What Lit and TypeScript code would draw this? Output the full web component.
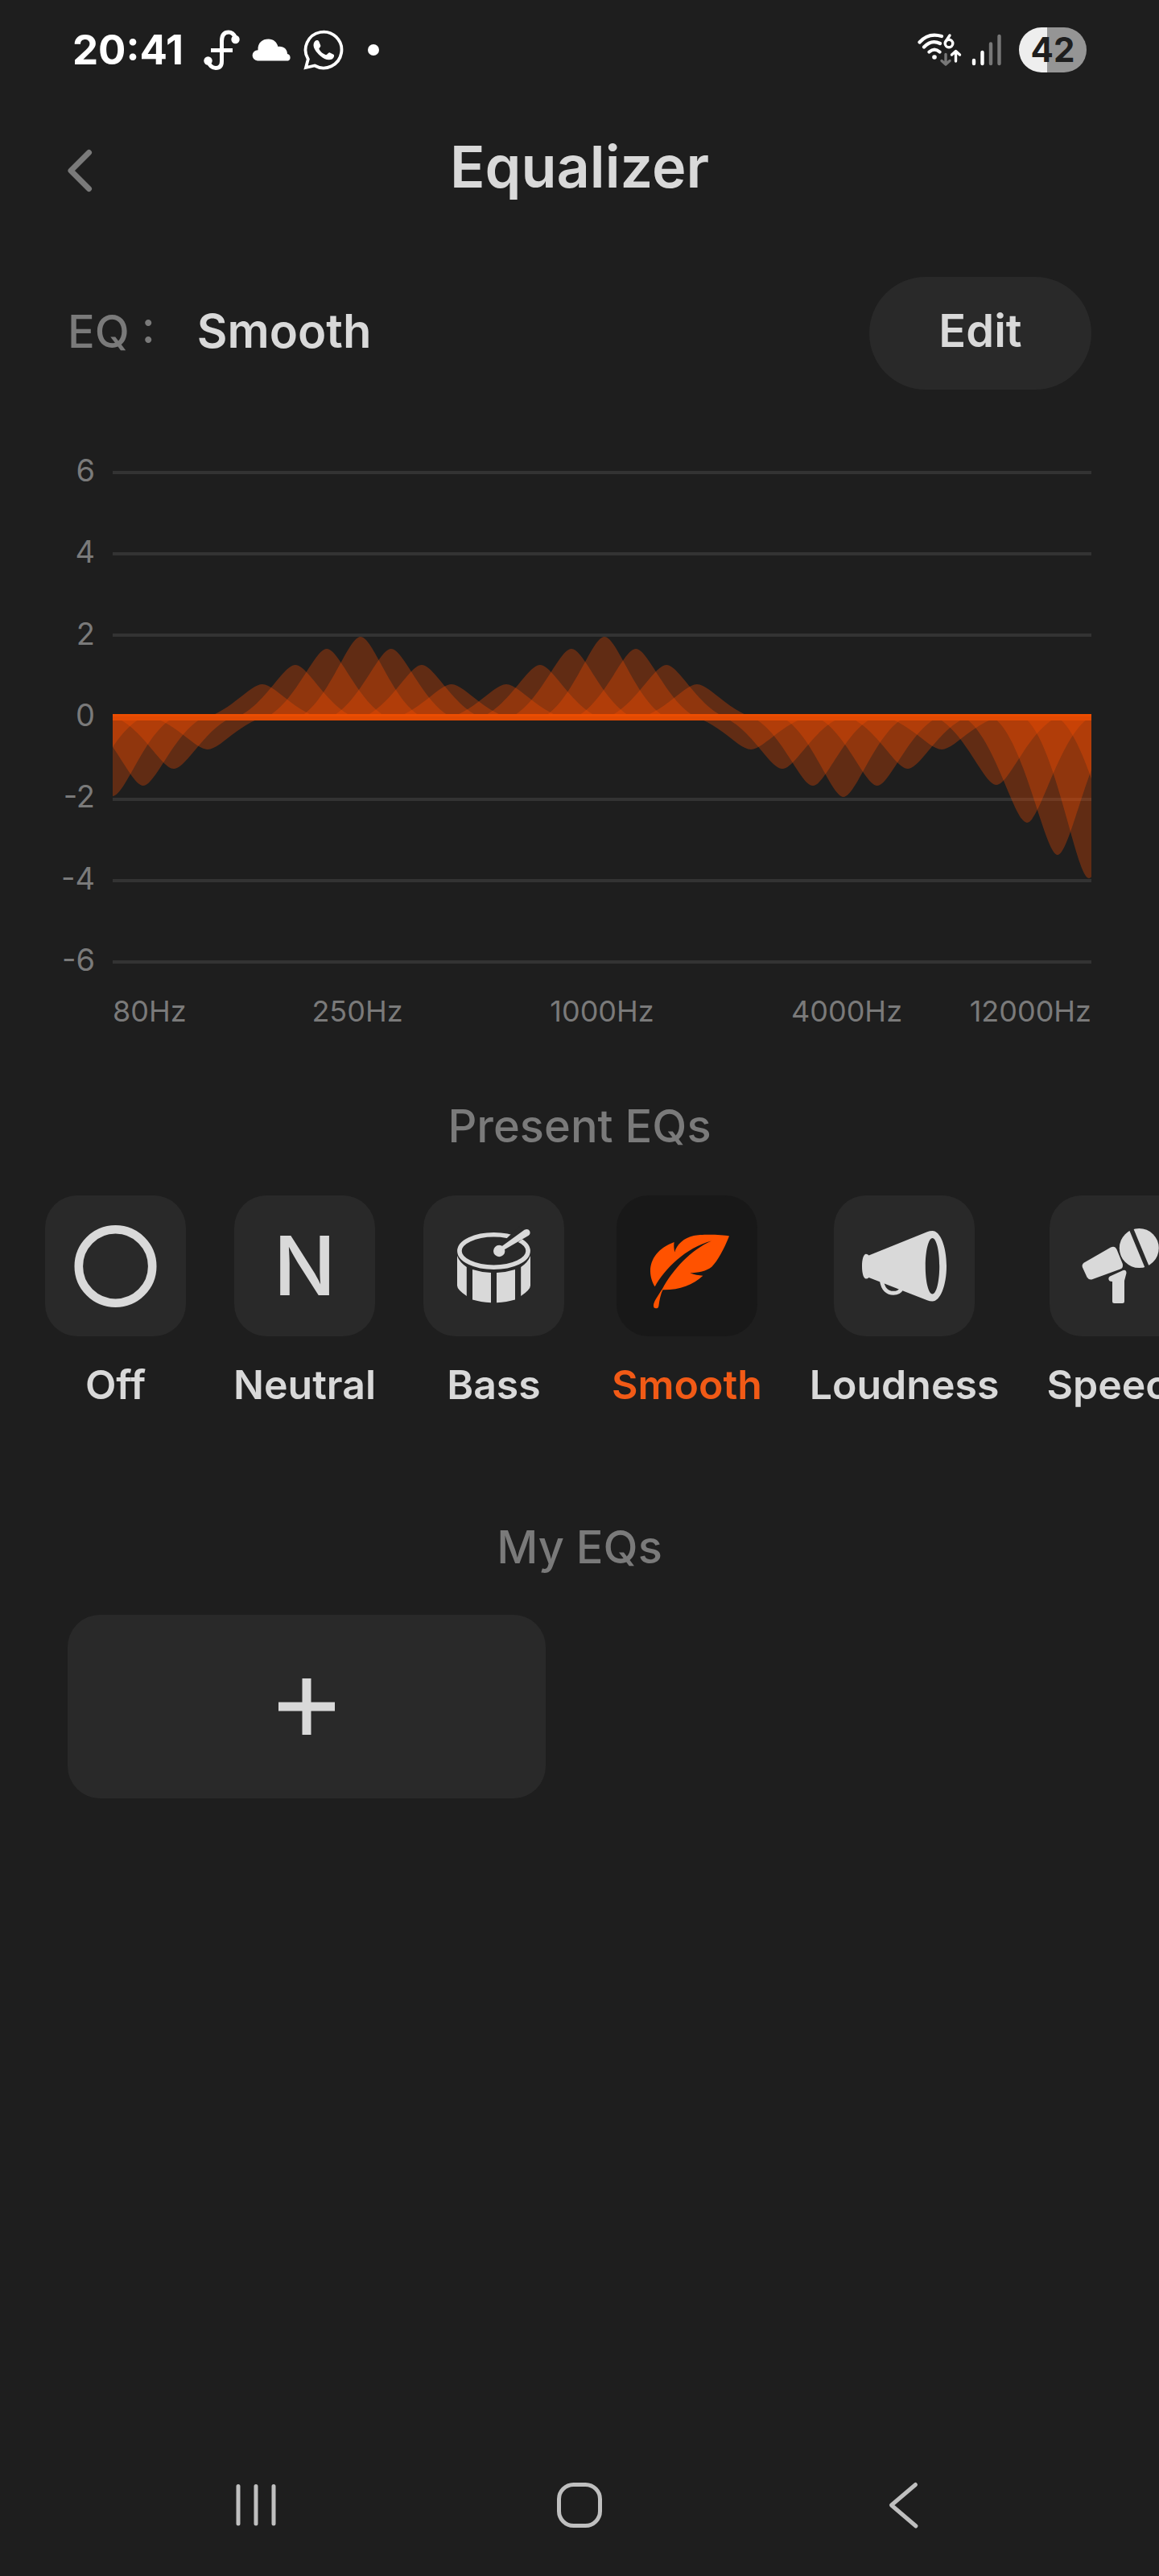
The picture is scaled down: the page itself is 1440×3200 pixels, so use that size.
import { LitElement, html, svg, css } from "lit";
import { customElement, property, state } from "lit/decorators.js";
import { classMap } from "lit/directives/class-map.js";

type Band = [x: number, gain: number];

/* Horizontal centre and gain in pixels of every filter band (positive = boost). */
const BANDS: Band[] = [
  [-78, -64], [-38, -85],
  [0, -98], [38, -85], [76, -64], [118, -40],
  [186, 41], [227, 65], [266, 85], [308, 100], [346, 85], [384, 65], [421, 41],
  [489, 41], [531, 65], [570, 85], [611, 100], [650, 85], [688, 65], [726, 41],
  [793, -40], [832, -64], [870, -85], [908, -99], [950, -85], [988, -64], [1030, -40],
  [1098, -84], [1136, -131], [1174, -171], [1213, -200],
  [1254, -171], [1292, -131],
];

const ZERO = 307;

@customElement("eq-chart")
export class EqChart extends LitElement {
  static styles = css`
    :host { display: block; }
    .chart { display: grid; grid-template-columns: 34px 1fr; column-gap: 22px; }
    .levels {
      display: flex; flex-direction: column; justify-content: space-between;
      align-items: flex-end; height: 644px; margin: 0; padding: 0; list-style: none;
    }
    .levels, .freqs { color: #7a7a7a; font-weight: 400; }
    .levels { font-size: 38px; line-height: 36px; white-space: nowrap; }
    .plot { display: block; width: 100%; height: 614px; margin-top: 18px; overflow: hidden; }
    .freqs {
      grid-column: 2; display: grid; grid-template-columns: 1fr 2fr 2fr 2fr 1fr;
      margin: 26px 0 0; padding: 0; list-style: none; font-size: 36px; line-height: 40px;
      white-space: nowrap; text-align: center;
    }
    .freqs li:first-child { justify-self: start; }
    .freqs li:last-child { justify-self: end; }
  `;

  private bell([x, g]: Band) {
    const base = g > 0 ? ZERO + 4 : ZERO - 4;
    const top = ZERO - g;
    return svg`<path fill="#ff5000" fill-opacity="0.3" d="M${x - 92} ${base}C${x - 46} ${base} ${x - 18} ${top} ${x} ${top}S${x + 46} ${base} ${x + 92} ${base}Z"/>`;
  }

  render() {
    return html`
      <div class="chart">
        <ul class="levels">
          ${[6, 4, 2, 0, -2, -4, -6].map((n) => html`<li>${n}</li>`)}
        </ul>
        <svg class="plot" viewBox="0 0 1216 614" preserveAspectRatio="none" role="img" aria-label="Equalizer curve">
          ${[3, 104, 205, 409, 510, 611].map(
            (y) => svg`<rect x="0" y=${y - 2} width="1216" height="4" fill="#333333"/>`
          )}
          ${BANDS.map((b) => this.bell(b))}
          <rect x="0" y=${ZERO - 4} width="1216" height="8" fill="#e24a03"/>
          <rect x="0" y=${ZERO - 4} width="1216" height="3" fill="#ec4d01"/>
        </svg>
        <ul class="freqs">
          ${["80Hz", "250Hz", "1000Hz", "4000Hz", "12000Hz"].map((f) => html`<li>${f}</li>`)}
        </ul>
      </div>
    `;
  }
}

const ICONS: Record<string, unknown> = {
  Off: svg`<circle cx="87.5" cy="88" r="45.7" fill="none" stroke="currentColor" stroke-width="10.6"/>`,
  Bass: svg`
    <ellipse cx="87.5" cy="69" rx="42.6" ry="20.2" fill="none" stroke="currentColor" stroke-width="5.6"/>
    <path d="M103 60 L122 42" stroke="#292929" stroke-width="9"/>
    <path d="M107 55 L118 48 L122 55 L112 62Z" fill="#292929"/>
    <circle cx="94.2" cy="69" r="7.2" fill="currentColor"/>
    <path fill="currentColor" d="M97 63.500L125.500 42.800Q130 40.500 132 44Q133.800 47.500 130.500 50L99.500 68Z"/>
    <g fill="currentColor">
      <path d="M42 75Q45 83 53.800 89V125Q42 117 42 112Z"/>
      <path d="M133 75Q130 83 121.200 89V125Q133 117 133 112Z"/>
      <path d="M61 92Q72 95.500 84 96V133.300Q71 132.500 61 129.500Z"/>
      <path d="M114 92Q103 95.500 91 96V133.300Q104 132.500 114 129.500Z"/>
    </g>`,
  Smooth: svg`
    <path fill="currentColor" d="M140 50.500C131 48.500 105 48 96 50C84 52.500 74.500 61 72.300 70.500C71.300 66 71 62 71.600 58C52 65 42 79 42 94C42 101 44.500 108.500 47.700 113.300C60 91 86 65 118 56.500C92 68 70 92 57 116C50 127 46 132 46 137Q46 140.300 49 140.300H50Q52 140.300 52.500 136.500C53.500 129 55 122 57.500 117.200C78 117.500 95 111.500 107.300 99.700C102 99.500 96.500 98.500 91.300 96.300C101 96.300 112 94 118.500 88.500C126 80.500 133 68 140 50.500Z"/>`,
  Loudness: svg`
    <path fill="none" stroke="currentColor" stroke-width="5" d="M59.500 106C61 117 67 121.300 74 121.300C79 121.300 82 120 84 116"/>
    <path fill="currentColor" fill-rule="evenodd" d="M35 88C35 79 37 72.700 40 72.700Q42 72.700 43.500 74.500L116 45.200Q119 44 122.500 44C132 44 140 63 140 87.700S132 131.500 122.500 131.500Q119 131.500 116 130.300L43.500 102Q42 103.500 40 103.500C37 103.500 35 97 35 88ZM122.500 53C117.700 53 113.800 68.500 113.800 87.700S117.700 122.500 122.500 122.500S131.200 107 131.200 87.700S127.300 53 122.500 53Z"/>`,
  Speech: svg`
    <circle cx="111.300" cy="65.500" r="24.500" fill="currentColor"/>
    <path d="M101 40.500L122 91" stroke="#292929" stroke-width="5.500"/>
    <path fill="currentColor" d="M43 83.500L76 64.500Q81 62 83.500 67L90.800 85Q92 90 88 91.500L53 104.300Q49 105.500 46.500 101.500L41 89.500Q39.500 86 43 83.500Z"/>
    <path fill="currentColor" d="M75 100.500L91.500 93Q95.500 92 95.500 96.500L93 106V131.500Q93 134 90.500 134H80.500Q78 134 78 131.500V107Q73.500 107 73.300 103.500Q73.300 101.300 75 100.500Z"/>`,
};

@customElement("eq-preset")
export class EqPreset extends LitElement {
  static styles = css`
    :host { display: block; flex: none; }
    .preset {
      display: flex; flex-direction: column; align-items: center; gap: 30px;
      border: 0; padding: 0; background: none; font: inherit; color: #d9d9d9; cursor: pointer;
    }
    .tile {
      display: grid; place-items: center; width: 175px; height: 175px;
      border-radius: 40px; background: #292929;
    }
    .icon { display: block; width: 175px; height: 175px; }
    .letter { font-size: 102px; line-height: 175px; font-weight: 500; }
    .name { font-size: 50px; line-height: 60px; font-weight: 600; }
    .active .tile { background: #181818; color: #ff5200; }
    .active .name { color: #f15a16; }
  `;

  @property() name = "";
  @property({ type: Boolean }) active = false;

  render() {
    return html`
      <button class=${classMap({ preset: true, active: this.active })} aria-pressed=${this.active}>
        <span class="tile">
          ${this.name === "Neutral"
            ? html`<span class="letter" aria-hidden="true">N</span>`
            : html`<svg class="icon" viewBox="0 0 175 175" aria-hidden="true">${ICONS[this.name]}</svg>`}
        </span>
        <span class="name">${this.name}</span>
      </button>
    `;
  }
}

@customElement("status-bar")
export class StatusBar extends LitElement {
  static styles = css`
    :host { display: block; }
    .bar {
      display: flex; align-items: center; justify-content: space-between;
      height: 124px; padding: 0 90px; color: #ffffff;
    }
    .side { display: flex; align-items: center; }
    .time { font-size: 51px; line-height: 60px; font-weight: 700; margin-right: 25px; }
    .apps { display: flex; align-items: center; gap: 14px; }
    .dot { width: 14px; height: 14px; border-radius: 7px; background: #ffffff; margin-left: 16px; }
    .wifi { margin-right: 12px; }
    .signal { margin-right: 21px; }
    svg { display: block; }
    .battery {
      width: 84px; height: 56px; border-radius: 28px; color: #1e1e1e;
      background: linear-gradient(90deg, #eeeeee 42%, #959595 42%);
      font-size: 42px; line-height: 56px; font-weight: 700; text-align: center;
    }
  `;

  render() {
    return html`
      <div class="bar">
        <div class="side">
          <time class="time">20:41</time>
          <div class="apps">
            <svg width="46" height="50" viewBox="0 0 46 50" aria-hidden="true">
              <path fill="none" stroke="#fff" stroke-width="5" d="M5 38C7 44 10 47.500 15 47.500Q22.500 47.500 22.500 39V14Q22.500 3 31 3C36 3 38 6 40 10M9 25.500H36"/>
              <circle cx="5.500" cy="38.500" r="5.200" fill="#fff"/><circle cx="39.500" cy="12" r="5.200" fill="#fff"/>
            </svg>
            <svg width="50" height="28" viewBox="0 0 50 28" aria-hidden="true">
              <path fill="#fff" d="M7 27.500A6.500 6.500 0 0 1 7.500 14.200C7 5 13 .500 20.500 .500C27 .500 31 4.500 32.500 10C39 9 44 13 44 19A4.500 4.500 0 0 1 45 27.500Z"/>
            </svg>
            <svg width="50" height="50" viewBox="0 0 50 50" aria-hidden="true">
              <path fill="none" stroke="#fff" stroke-width="3.800" d="M3 47L5.800 36.500A22.400 22.400 0 1 1 14 44.500Z"/>
              <path fill="#fff" d="M14 14.500C16 12.500 18.500 12.500 19.500 15L21.300 19.500C21.800 21 19.500 22.700 19.300 23.800C21 27.500 24.500 30 28 31.300C29.500 31 31 28 32.500 28.300L37.500 30.800C39 32 37.500 35.500 35.500 36.500C31 38.500 25.500 36.500 20.500 32C16 28 12.500 23 12.500 19Q12.500 16 14 14.500Z"/>
            </svg>
            <span class="dot"></span>
          </div>
        </div>
        <div class="side">
          <svg class="wifi" width="55" height="42" viewBox="0 0 55 42" role="img" aria-label="Wi-Fi 6">
            <g fill="none" stroke="#fff" stroke-width="4.200" stroke-linecap="round">
              <path d="M2.500 11.500C10 3 20 1 30 4M8 17.500C14 11 21 9.500 28 13M14.500 23.500C19 19.500 23 19.500 27.500 23.500"/>
            </g>
            <circle cx="21" cy="30" r="2.800" fill="#fff"/>
            <g fill="none" stroke="#fff" stroke-width="3.400" stroke-linecap="round" stroke-linejoin="round">
              <circle cx="39" cy="13" r="4.800"/><path d="M35 10.500L40 3"/>
              <path d="M47.500 35V23M42.500 27L47.500 22.500L52.500 27"/>
              <path stroke="#777" d="M35 26.500V38.500M30 34.500L35 39L40 34.500"/>
            </g>
          </svg>
          <svg class="signal" width="38" height="42" viewBox="0 0 38 42" role="img" aria-label="Signal strength">
            <g stroke-width="4.400" stroke-linecap="round">
              <path stroke="#fff" d="M3 34V38M13.500 24V38"/>
              <path stroke="#777" d="M24 13.500V38M34.500 4V38"/>
            </g>
          </svg>
          <div class="battery">42</div>
        </div>
      </div>
    `;
  }
}

@customElement("app-root")
export class AppRoot extends LitElement {
  static styles = css`
    :host { display: block; }
    .screen {
      display: flex; flex-direction: column; min-height: 100vh; overflow: hidden;
      background: #1e1e1e; color: #d9d9d9; font-family: Inter, "Liberation Sans", sans-serif;
    }
    button { border: 0; padding: 0; background: none; font: inherit; color: inherit; cursor: pointer; }
    svg { display: block; }
    h1, h2, p { margin: 0; font-weight: 500; }
    .header {
      display: grid; grid-template-columns: 1fr auto 1fr; align-items: center;
      height: 166px; padding: 0 84px;
    }
    .back { justify-self: start; }
    .title { font-size: 72px; line-height: 84px; font-weight: 600; }
    .current {
      display: flex; align-items: center; justify-content: space-between;
      padding: 54px 84px 0;
    }
    .label {
      display: flex; align-items: baseline; gap: 52px; padding-bottom: 6px;
      font-size: 56px; line-height: 68px;
    }
    .value { font-size: 58px; font-weight: 600; }
    .key, .section { color: #7a7a7a; }
    .edit {
      box-sizing: border-box; width: 276px; height: 140px; padding-bottom: 6px; border-radius: 70px;
      background: #292929; font-size: 56px; font-weight: 600;
    }
    .graph { padding: 82px 84px 0; }
    .section { font-size: 56px; line-height: 68px; text-align: center; }
    .present { margin-top: 89px; }
    .presets { display: flex; gap: 59px; padding: 52px 56px 0; overflow: hidden; }
    .mine { margin-top: 138px; }
    .customs { display: grid; grid-template-columns: 1fr 1fr; gap: 84px; padding: 50px 84px 0; }
    .add {
      display: grid; place-items: center; height: 228px; border-radius: 40px; background: #292929;
    }
    .nav {
      display: grid; grid-template-columns: repeat(3, 1fr); justify-items: center;
      margin-top: auto; padding: 0 117px 58px;
    }
    .nav svg { fill: none; stroke: #bfbfbf; stroke-width: 5; stroke-linecap: round; stroke-linejoin: round; }
  `;

  @state() private selected = "Smooth";

  render() {
    const names = ["Off", "Neutral", "Bass", "Smooth", "Loudness", "Speech"];
    return html`
      <div class="screen">
        <status-bar></status-bar>
        <header class="header">
          <button class="back" aria-label="Back">
            <svg width="32" height="64" viewBox="0 0 32 64" fill="none" stroke="#7a7a7a" stroke-width="7" stroke-linecap="round" stroke-linejoin="round">
              <path d="M26.500 14.500L4 37L26.500 59.500"/>
            </svg>
          </button>
          <h1 class="title">Equalizer</h1>
        </header>
        <section class="current">
          <p class="label"><span class="key">EQ :</span><span class="value">${this.selected}</span></p>
          <button class="edit">Edit</button>
        </section>
        <eq-chart class="graph"></eq-chart>
        <h2 class="section present">Present EQs</h2>
        <div class="presets">
          ${names.map(
            (n) => html`<eq-preset .name=${n} .active=${n === this.selected} @click=${() => (this.selected = n)}></eq-preset>`
          )}
        </div>
        <h2 class="section mine">My EQs</h2>
        <div class="customs">
          <button class="add" aria-label="Add EQ">
            <svg width="70" height="70" viewBox="0 0 70 70" stroke="#d9d9d9" stroke-width="11">
              <path d="M35 0V70M0 35H70"/>
            </svg>
          </button>
        </div>
        <nav class="nav">
          <button aria-label="Recent apps">
            <svg width="60" height="60" viewBox="0 0 60 60"><path d="M8 6.500V53M30 6.500V53M52 6.500V53"/></svg>
          </button>
          <button aria-label="Home">
            <svg width="60" height="60" viewBox="0 0 60 60"><rect x="4.500" y="4.500" width="51" height="51" rx="18"/></svg>
          </button>
          <button aria-label="Go back">
            <svg width="60" height="60" viewBox="0 0 60 60"><path d="M45.500 4.500L15.500 30L46 56"/></svg>
          </button>
        </nav>
      </div>
    `;
  }
}
